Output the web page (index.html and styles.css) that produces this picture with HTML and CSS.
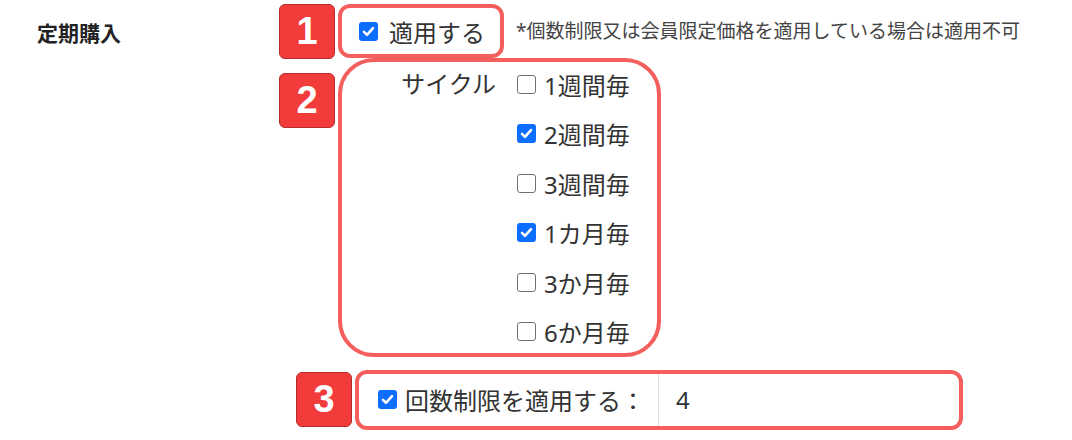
FILE: index.html
```html
<!DOCTYPE html>
<html lang="ja">
<head>
    <meta charset="UTF-8">
    <meta name="viewport" content="width=device-width, initial-scale=1.0">
    <title>定期購入</title>
    <link rel="stylesheet" href="styles.css">
</head>
<body>
    <div class="field">
        <div class="field-label">定期購入</div>

        <div class="field-body">
            <!-- 1: 適用 -->
            <div class="step step-apply">
                <span class="num">1</span>
                <div class="mark mark-apply">
                    <label class="check">
                        <span class="box on"><svg viewBox="0 0 19 19"><path d="M5 9.8l3 3 6-6.6"/></svg></span>
                        適用する
                    </label>
                </div>
                <span class="note">*個数制限又は会員限定価格を適用している場合は適用不可</span>
            </div>

            <!-- 2: サイクル -->
            <div class="step step-cycle">
                <span class="num">2</span>
                <div class="mark mark-cycle">
                    <div class="cycle-label">サイクル</div>
                    <div class="cycle-list">
                        <label class="check"><span class="box"></span>1週間毎</label>
                        <label class="check"><span class="box on"><svg viewBox="0 0 19 19"><path d="M5 9.8l3 3 6-6.6"/></svg></span>2週間毎</label>
                        <label class="check"><span class="box"></span>3週間毎</label>
                        <label class="check"><span class="box on"><svg viewBox="0 0 19 19"><path d="M5 9.8l3 3 6-6.6"/></svg></span>1カ月毎</label>
                        <label class="check"><span class="box"></span>3か月毎</label>
                        <label class="check"><span class="box"></span>6か月毎</label>
                    </div>
                </div>
            </div>

            <!-- 3: 回数制限 -->
            <div class="step step-limit">
                <span class="num">3</span>
                <div class="mark mark-limit">
                    <label class="check limit-label">
                        <span class="box on"><svg viewBox="0 0 19 19"><path d="M5 9.8l3 3 6-6.6"/></svg></span>
                        回数制限を適用する：
                    </label>
                    <div class="limit-input">4</div>
                </div>
            </div>
        </div>
    </div>
</body>
</html>
```

FILE: styles.css
```css
body {
    margin: 0;
    padding-top: 4px;
    background-color: white;
    color: #333;
    font-family: "Noto Sans", "Noto Sans CJK JP", sans-serif;
    font-size: 24px;
}

.field {
    display: flex;
}

.field-label {
    width: 242px;
    padding-left: 37px;
    line-height: 58px;
    font-size: 21px;
    font-weight: bold;
    color: #222;
}

.step {
    display: flex;
    align-items: flex-start;
    gap: 3px;
}

.num {
    box-sizing: border-box;
    width: 56px;
    height: 55px;
    display: flex;
    align-items: center;
    justify-content: center;
    background-color: #f23b3b;
    border: 1.5px solid #b82b2b;
    border-radius: 6px;
    color: white;
    font-family: "Liberation Sans", Arial, sans-serif;
    font-size: 38px;
    font-weight: bold;
}

.mark {
    box-sizing: border-box;
    border: 4px solid #f45e5c;
    border-radius: 12px;
    background-color: white;
}

.check {
    display: flex;
    align-items: center;
    gap: 8px;
    white-space: nowrap;
}

.box {
    box-sizing: border-box;
    width: 19px;
    height: 19px;
    flex: none;
    border: 1.5px solid #707070;
    border-radius: 3px;
    background-color: white;
}

.box.on {
    border: none;
    background-color: #0d6efd;
}

.box svg {
    display: block;
    width: 19px;
    height: 19px;
    fill: none;
    stroke: white;
    stroke-width: 2.6;
    stroke-linecap: round;
    stroke-linejoin: round;
}

/* 1 */
.mark-apply {
    width: 166px;
    height: 54px;
    display: flex;
    align-items: center;
    padding-left: 17px;
}

.mark-apply .check {
    gap: 11px;
}

.note {
    margin-left: 9px;
    line-height: 54px;
    font-size: 19px;
    color: #444;
}

/* 2 */
.step-cycle {
    margin-top: -1px;
}

.step-cycle .num {
    margin-top: 15px;
}

.mark-cycle {
    width: 323px;
    display: flex;
    padding-top: 1px;
    border-radius: 36px;
}

.cycle-label {
    width: 154px;
    text-align: right;
    line-height: 42px;
}

.cycle-list {
    margin-left: 21px;
    display: flex;
    flex-direction: column;
    gap: 7.5px;
}

.cycle-list .check {
    height: 42px;
}

/* 3 */
.step-limit {
    margin-top: 13px;
    margin-left: 17px;
}

.step-limit .num {
    margin-top: 2px;
}

.mark-limit {
    width: 608px;
    height: 60px;
    display: flex;
}

.limit-label {
    padding-left: 19px;
    padding-right: 13px;
}

.limit-input {
    flex: 1;
    border-left: 1px solid #dee2e6;
    padding-left: 17px;
    line-height: 52px;
}
```
